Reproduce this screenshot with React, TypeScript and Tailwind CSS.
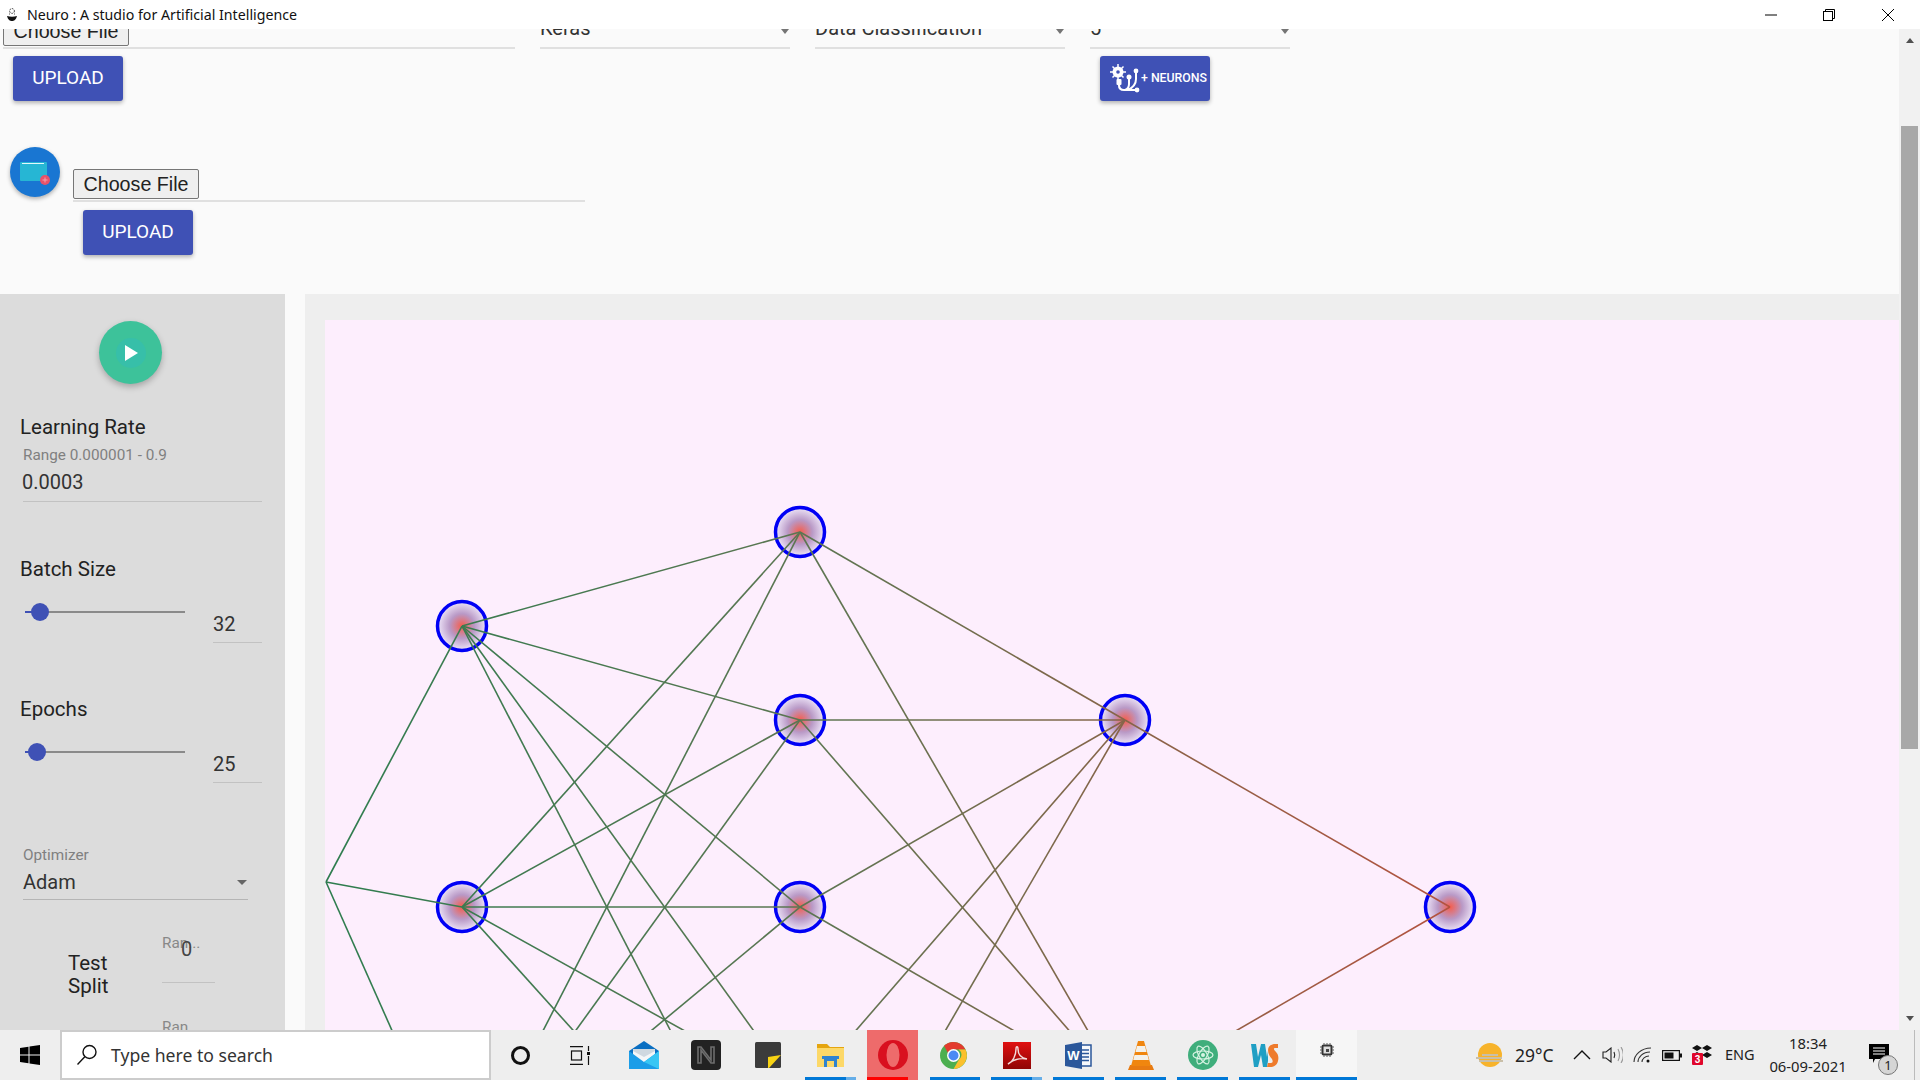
import { ReactNode } from "react";

const roboto = "font-['Roboto',sans-serif]";

// network layers, in page coordinates (the svg viewBox starts at the canvas corner)
const layers = [
  { x: 326, ys: [882] },
  { x: 462, ys: [626, 907, 1188] },
  { x: 800, ys: [532, 720, 907, 1095, 1282] },
  { x: 1125, ys: [720, 1095] },
  { x: 1450, ys: [907] },
];

const Network = () => {
  const lines: { x1: number; y1: number; x2: number; y2: number }[] = [];
  layers.forEach((layer, i) => {
    const next = layers[i + 1];
    if (!next) return;
    layer.ys.forEach((y1) => {
      next.ys.forEach((y2) => lines.push({ x1: layer.x, y1, x2: next.x, y2 }));
    });
  });

  return (
    <svg className="block h-full w-full" viewBox="325 320 1574 710" preserveAspectRatio="xMinYMin slice">
      <defs>
        <radialGradient id="nodeFill">
          <stop offset="0%" stopColor="#f65d4c" />
          <stop offset="50%" stopColor="#b999c6" />
          <stop offset="100%" stopColor="#eee6f9" />
        </radialGradient>
        <linearGradient id="lineStroke" gradientUnits="userSpaceOnUse" x1="326" y1="0" x2="1450" y2="0">
          <stop offset="0%" stopColor="#2e7d4f" />
          <stop offset="45%" stopColor="#5f7552" />
          <stop offset="100%" stopColor="#b4523f" />
        </linearGradient>
      </defs>
      {layers.slice(1).map((layer) =>
        layer.ys.map((y) => (
          <circle key={`${layer.x}-${y}`} cx={layer.x} cy={y} r="24.5" fill="url(#nodeFill)" stroke="#0000f5" strokeWidth="3.5" />
        )),
      )}
      {lines.map((l, i) => (
        <path key={i} d={`M${l.x1} ${l.y1}L${l.x2} ${l.y2 + 0.01}`} stroke="url(#lineStroke)" strokeWidth="1.6" fill="none" />
      ))}
    </svg>
  );
};

const FileField = () => (
  <div className="flex h-[33px] items-start border-b-2 border-[#e0e0e0]">
    <button className="h-[30px] w-[126px] rounded-[2px] border border-[#767676] bg-[#efefef] font-['Liberation_Sans',sans-serif] text-[19.7px] leading-[28px] text-[#222]">
      Choose File
    </button>
  </div>
);

const UploadButton = () => (
  <button className={`${roboto} h-[45px] w-[110px] rounded-[3px] bg-[#3f51b5] text-[19px] font-normal text-white shadow-[0_2px_4px_rgba(0,0,0,0.3)]`}>
    UPLOAD
  </button>
);

const TopSelect = ({ label, className }: { label: string; className: string }) => (
  <div className={`${roboto} relative h-[33px] border-b-2 border-[#e0e0e0] text-[20px] leading-[25px] text-[#333] ${className}`}>
    {label}
    <span className="absolute right-[1px] top-[13px] h-0 w-0 border-x-[4px] border-t-[5px] border-x-transparent border-t-[#757575]" />
  </div>
);

const NeuronIcon = () => (
  <svg className="shrink-0" width="31" height="31" viewBox="0 0 31 31" fill="none" stroke="#fff" strokeWidth="2">
    <path d="M8 1v16M0 9h16M2.500 3.500l11 11M13.500 3.500l-11 11" strokeWidth="1.500" />
    <circle cx="8" cy="9" r="5.500" fill="#fff" stroke="none" />
    <circle cx="8" cy="9" r="1.800" fill="#3f51b5" stroke="none" />
    <rect x="6.500" y="16" width="5" height="6" rx="1" fill="#fff" stroke="none" />
    <path d="M9 22c0 4 2 5 5 5h13" strokeWidth="2.200" />
    <path d="M19 14v7c0 3-1 5-4 6M26 8v8c0 5-4 9-8 11" strokeWidth="2" />
    <circle cx="19" cy="14" r="2.500" fill="#fff" stroke="none" />
    <circle cx="26" cy="8" r="2.400" fill="#fff" stroke="none" />
    <circle cx="27" cy="27" r="2.400" fill="#fff" stroke="none" />
  </svg>
);

const Slider = ({ thumb }: { thumb: string }) => (
  <div className="relative mt-[30px] h-[2px] w-[160px] bg-[#8a8a8a]">
    <div className={`h-full bg-[#3f51b5] ${thumb === "a" ? "w-[14px]" : "w-[12px]"}`} />
    <div className={`absolute top-[-8px] h-[18px] w-[18px] rounded-full bg-[#3f51b5] ${thumb === "a" ? "left-[6px]" : "left-[3px]"}`} />
  </div>
);

const SliderRow = ({ label, value, thumb, className }: { label: string; value: string; thumb: string; className: string }) => (
  <div className={className}>
    <div className="pl-[20px] text-[20.5px] leading-[24px] text-[#222]">{label}</div>
    <div className="flex pl-[25px]">
      <Slider thumb={thumb} />
      <div className="ml-[28px] mt-[30px] h-[32px] w-[49px] border-b border-[#c2c2c2] text-[20px] leading-[26px] text-[#333]">{value}</div>
    </div>
  </div>
);

const Settings = () => (
  <div className={`${roboto} h-full w-[285px] shrink-0 overflow-hidden bg-[#dcdcdc]`}>
    <div className="ml-[99px] mt-[27px] flex h-[63px] w-[63px] items-center justify-center rounded-full bg-[#3dc29a] shadow-[0_3px_6px_rgba(0,0,0,0.25)]">
      <div className="flex h-[30px] w-[30px] items-center justify-center rounded-full bg-[#37bfa9]">
        <svg width="14" height="16" viewBox="0 0 14 16"><path d="M1 0l13 8-13 8z" fill="#fff" /></svg>
      </div>
    </div>

    <div className="mt-[31px] pl-[20px] text-[20.5px] leading-[24px] text-[#222]">Learning Rate</div>
    <div className="ml-[23px] mt-[7px] h-[56px] w-[239px] border-b border-[#c2c2c2]">
      <div className="text-[15.3px] leading-[18px] text-[#808080]">Range 0.000001 - 0.9</div>
      <div className="ml-[-1px] mt-[5px] text-[20px] leading-[26px] text-[#333]">0.0003</div>
    </div>

    <SliderRow className="mt-[55px]" label="Batch Size" value="32" thumb="a" />
    <SliderRow className="mt-[54px]" label="Epochs" value="25" thumb="b" />

    <div className="ml-[23px] mt-[63px] h-[54px] w-[225px] border-b border-[#b5b5b5] text-[#333]">
      <div className="text-[15.3px] leading-[18px] text-[#808080]">Optimizer</div>
      <div className="relative mt-[5px] text-[20px] leading-[26px]">
        Adam
        <span className="absolute right-[1px] top-[11px] h-0 w-0 border-x-[5px] border-t-[5px] border-x-transparent border-t-[#666]" />
      </div>
    </div>

    <div className="mt-[34px] flex">
      <div className="ml-[68px] mt-[18px] w-[60px] text-[20.5px] leading-[23px] text-[#222]">
        Test<br />Split
      </div>
      <div className="ml-[34px]">
        <div className="relative h-[49px] w-[53px] border-b border-[#c2c2c2] text-[15.3px] leading-[18px] text-[#888]">
          Ran...
          <span className="absolute left-[19px] top-[3px] text-[20px] leading-[24px] text-[#444]">0</span>
        </div>
        <div className="relative mt-[35px] text-[15.3px] leading-[18px] text-[#888]">
          Ran
          <span className="absolute left-[19px] top-[8px] text-[20px] leading-[24px] text-[#444]">8</span>
        </div>
      </div>
    </div>
  </div>
);

const TaskIcon = ({ children, className = "", bar }: { children: ReactNode; className?: string; bar?: string }) => (
  <div className={`relative flex h-full shrink-0 items-center justify-center ${className}`}>
    {children}
    {bar && <div className={`absolute bottom-0 h-[3px] ${bar}`} />}
  </div>
);

const blueBar = "left-0 right-0 bg-[#0078d7]";

const MailIcon = () => (
  <svg width="30" height="28" viewBox="0 0 30 28">
    <path d="M0 10L15 0l15 10v18H0z" fill="#0a6fc2" />
    <path d="M4 8h22v8l-11 7-11-7z" fill="#f4f6f8" />
    <path d="M4 8h22v2l-11 6-11-6z" fill="#cfd8e0" />
    <path d="M0 10l15 11 15-11v18H0z" fill="#1b9de8" />
    <path d="M15 21l15-11v18z" fill="#38c6f4" />
  </svg>
);

const NotionIcon = () => (
  <svg width="30" height="30" viewBox="0 0 30 30">
    <rect width="30" height="30" rx="4" fill="#222" />
    <path d="M7 23V7h3l10 13V7h3v16h-3L10 10v13z" fill="none" stroke="#6e6e6e" strokeWidth="1.600" />
  </svg>
);

const StickyIcon = () => (
  <svg width="26" height="26" viewBox="0 0 26 26">
    <rect width="26" height="26" rx="1.500" fill="#3b3b3b" />
    <path d="M13 15l13-2-12 13h-1z" fill="#f8d313" />
  </svg>
);

const ExplorerIcon = () => (
  <svg width="27" height="23" viewBox="0 0 27 23">
    <path d="M0 0h10l3 3h14v8H0z" fill="#e5a50f" />
    <path d="M0 4h27v19H0z" fill="#fcd868" />
    <path d="M5 12h17v3h-2v8h-3v-6h-7v6H7v-8H5z" fill="#2f83d0" />
  </svg>
);

const OperaIcon = () => (
  <svg width="30" height="30" viewBox="0 0 30 30">
    <circle cx="15" cy="15" r="15" fill="#d9101f" />
    <ellipse cx="15" cy="15" rx="6.500" ry="12" fill="#ee6b6b" />
  </svg>
);

const ChromeIcon = () => (
  <svg width="27" height="27" viewBox="0 0 27 27">
    <circle cx="13.500" cy="13.500" r="13.500" fill="#4caf50" />
    <path d="M13.500 0A13.500 13.500 0 0 1 25.500 7.500H13.500a6 6 0 0 0-5.500 3.500L4 3.800A13.500 13.500 0 0 1 13.500 0z" fill="#e33b2e" />
    <path d="M25.500 7.500A13.500 13.500 0 0 1 13.500 27l5.500-9.500a6 6 0 0 0-.5-10z" fill="#fbc02d" />
    <circle cx="13.500" cy="13.500" r="6.500" fill="#fff" />
    <circle cx="13.500" cy="13.500" r="5" fill="#4a8af4" />
  </svg>
);

const AcrobatIcon = () => (
  <svg width="28" height="27" viewBox="0 0 28 27">
    <defs>
      <linearGradient id="acroFill" x1="0" y1="0" x2="0" y2="1">
        <stop offset="0%" stopColor="#e01010" />
        <stop offset="100%" stopColor="#8f0606" />
      </linearGradient>
    </defs>
    <rect width="28" height="27" fill="url(#acroFill)" />
    <path d="M5 22c5-2 8-9 8-15 0-3 2-3 2 0 0 5 3 9 9 10-6-1-13 0-19 5z" fill="none" stroke="#f3dede" strokeWidth="1.400" />
  </svg>
);

const WordIcon = () => (
  <svg width="27" height="27" viewBox="0 0 27 27">
    <path d="M15 3h11v21H15z" fill="#f6f8fb" stroke="#2b579a" strokeWidth="1.500" />
    <path d="M17 8h7M17 11.500h7M17 15h7M17 18.500h7" stroke="#2b579a" strokeWidth="1.400" />
    <path d="M0 3l17-3v27L0 24z" fill="#2b579a" />
    <text x="8.500" y="18" textAnchor="middle" fontFamily="Liberation Sans, sans-serif" fontSize="13" fontWeight="700" fill="#fff">W</text>
  </svg>
);

const VlcIcon = () => (
  <svg width="26" height="29" viewBox="0 0 26 29">
    <path d="M2 24h22l2 5H0z" fill="#e87b12" />
    <path d="M10 0h6l7 25H3z" fill="#f0860f" />
    <path d="M9 5h8l1.500 6H7.500zM6.500 14h13l1.300 5H5.200z" fill="#f4f1ea" />
  </svg>
);

const AtomIcon = () => (
  <svg width="30" height="30" viewBox="0 0 30 30">
    <circle cx="15" cy="15" r="15" fill="#3fae7c" />
    <g fill="none" stroke="#d7f3e3" strokeWidth="1.200">
      <ellipse cx="15" cy="15" rx="10" ry="4" />
      <ellipse cx="15" cy="15" rx="10" ry="4" transform="rotate(60 15 15)" />
      <ellipse cx="15" cy="15" rx="10" ry="4" transform="rotate(-60 15 15)" />
    </g>
    <circle cx="15" cy="15" r="2" fill="#d7f3e3" />
  </svg>
);

const WebStormIcon = () => (
  <svg width="28" height="24" viewBox="0 0 28 24">
    <path d="M0 1h5l2 13 3-13h4l2 13 1-6v10l-1 6h-4l-2-12-3 12H3z" fill="#1f9fc4" />
    <path d="M17 7c0-4 4-6 7-6h3v4h-3c-2 0-1 2 1 4 2 2 3 5 2 9-1 4-4 6-8 6h-3l1-4h3c2 0 2-2 1-4-2-2-4-5-4-9z" fill="#ee7b2c" />
  </svg>
);

const ChipIcon = () => (
  <svg width="14" height="14" viewBox="0 0 14 14">
    <rect x="1.500" y="1.500" width="11" height="11" rx="2" fill="#333" />
    <rect x="3.500" y="3.500" width="7" height="7" fill="#ddd" />
    <rect x="6" y="6" width="3" height="3" fill="#444" />
    <path d="M4 0v14M7 0v14M10 0v14M0 4h14M0 7h14M0 10h14" stroke="#333" strokeWidth=".8" strokeDasharray="1.500 11" />
  </svg>
);

const Taskbar = () => (
  <div className="flex h-[50px] shrink-0 items-stretch bg-[#eeeeee] font-['Noto_Sans',sans-serif] text-[#222]">
    <div className="flex w-[60px] items-center justify-center">
      <svg width="20" height="20" viewBox="0 0 20 20" fill="#000">
        <path d="M0 3l8.500-1.200v7.600H0zM9.500 1.600L20 0v9.400H9.500zM0 10.500h8.500v7.700L0 17zM9.500 10.500H20V20L9.500 18.400z" />
      </svg>
    </div>
    <div className="flex w-[431px] items-center border-2 border-[#cccccc] bg-white pl-[14px]">
      <svg width="22" height="22" viewBox="0 0 22 22" fill="none" stroke="#111" strokeWidth="1.400">
        <circle cx="13.500" cy="8" r="6.500" />
        <path d="M8.800 12.800L1.500 20.500" />
      </svg>
      <span className="ml-[13px] text-[17.6px] text-[#333]">Type here to search</span>
    </div>
    <TaskIcon className="ml-[1px] w-[56px]">
      <div className="h-[19px] w-[19px] rounded-full border-[3px] border-[#111]" />
    </TaskIcon>
    <TaskIcon className="w-[64px]">
      <svg width="21" height="19" viewBox="0 0 21 19" fill="none" stroke="#111" strokeWidth="1.200">
        <path d="M0 .6h13M0 18.400h13M18.500 0v5M18.500 10v9" />
        <rect x="1.500" y="5" width="10" height="9" />
        <rect x="17" y="6" width="3" height="3" fill="#111" stroke="none" />
      </svg>
    </TaskIcon>
    <TaskIcon className="w-[64px]"><MailIcon /></TaskIcon>
    <TaskIcon className="w-[60px]"><NotionIcon /></TaskIcon>
    <TaskIcon className="w-[64px]"><StickyIcon /></TaskIcon>
    <TaskIcon className="ml-[5px] w-[51px]" bar={blueBar}>
      <ExplorerIcon />
      <div className="absolute bottom-0 right-0 z-10 h-[3px] w-[10px] bg-[#66aee8]" />
    </TaskIcon>
    <TaskIcon className="ml-[11px] w-[51px] bg-[#ee6b6b]" bar="left-0 w-[41px] bg-[#ff0000]"><OperaIcon /></TaskIcon>
    <TaskIcon className="ml-[12px] w-[50px] pr-[4px]" bar={blueBar}><ChromeIcon /></TaskIcon>
    <TaskIcon className="ml-[11px] w-[51px]" bar={blueBar}>
      <AcrobatIcon />
      <div className="absolute bottom-0 right-0 z-10 h-[3px] w-[10px] bg-[#66aee8]" />
    </TaskIcon>
    <TaskIcon className="ml-[11px] w-[51px]" bar={blueBar}><WordIcon /></TaskIcon>
    <TaskIcon className="ml-[11px] w-[51px]" bar={blueBar}><VlcIcon /></TaskIcon>
    <TaskIcon className="ml-[11px] w-[51px]" bar={blueBar}><AtomIcon /></TaskIcon>
    <TaskIcon className="ml-[11px] w-[51px]" bar={blueBar}><WebStormIcon /></TaskIcon>
    <TaskIcon className="ml-[6px] w-[61px] bg-[#f6f6f6]" bar={blueBar}>
      <div className="mb-[10px]"><ChipIcon /></div>
    </TaskIcon>

    <div className="ml-[118px] flex w-[30px] items-center justify-center">
      <svg width="30" height="26" viewBox="0 0 30 26">
        <circle cx="15" cy="13" r="12" fill="#f7b32b" />
        <path d="M1 16h26M4 19h24M7 13h16" stroke="#c9bfa8" strokeWidth="2.200" />
      </svg>
    </div>
    <div className="ml-[10px] flex w-[44px] items-center text-[17.5px]">29°C</div>
    <div className="ml-[13px] flex w-[20px] items-center justify-center">
      <svg width="18" height="10" viewBox="0 0 18 10" fill="none" stroke="#111" strokeWidth="1.400"><path d="M1 9l8-8 8 8" /></svg>
    </div>
    <div className="ml-[9px] flex w-[22px] items-center justify-center">
      <svg width="21" height="16" viewBox="0 0 21 16" fill="none" stroke="#222" strokeWidth="1.100">
        <path d="M1 5h3l5-4v14l-5-4H1z" />
        <path d="M12 5c1 2 1 4 0 6" />
        <path d="M16 2c2 4 2 8 0 12M19 0c3 5 3 11 0 16" stroke="#999" />
      </svg>
    </div>
    <div className="ml-[9px] flex w-[22px] items-center justify-center">
      <svg width="20" height="16" viewBox="0 0 20 16" fill="none" stroke="#333" strokeWidth="1.100">
        <path d="M1 15C1 8 8 1 18 1M5 15c0-5 5-10 12-10M9 15c0-3 3-6 7-6" />
        <circle cx="15" cy="14" r="1.500" fill="#111" stroke="none" />
      </svg>
    </div>
    <div className="ml-[8px] flex w-[20px] items-center justify-center">
      <svg width="20" height="11" viewBox="0 0 20 11">
        <rect x=".6" y=".6" width="16.800" height="9.800" fill="none" stroke="#111" strokeWidth="1.200" />
        <rect x="2.500" y="2.500" width="9" height="6" fill="#111" />
        <rect x="18" y="3.500" width="2" height="4" fill="#111" />
      </svg>
    </div>
    <div className="relative ml-[10px] flex w-[20px] items-center justify-center">
      <svg width="20" height="20" viewBox="0 0 20 20">
        <path d="M5 0l5 3-5 3-5-3zM15 0l5 3-5 3-5-3zM5 7l5 3-5 3-5-3zM15 7l5 3-5 3-5-3z" fill="#111" />
        <rect x="0" y="8" width="11" height="12" rx="1" fill="#e0062b" />
        <text x="5.500" y="18" textAnchor="middle" fontFamily="Liberation Sans, sans-serif" fontSize="10" fontWeight="700" fill="#fff">3</text>
      </svg>
    </div>
    <div className="ml-[13px] flex w-[38px] items-center text-[14.5px]">ENG</div>
    <div className="flex w-[90px] flex-col items-center justify-center text-[14.8px] leading-[23px]">
      <span>18:34</span>
      <span>06-09-2021</span>
    </div>
    <div className="relative ml-[16px] flex w-[30px] items-center">
      <svg className="mb-[4px]" width="20" height="19" viewBox="0 0 20 19">
        <path d="M0 0h20v15H6l-2 4v-4H0z" fill="#000" />
        <path d="M4 4h12M4 7h12M4 10h12" stroke="#fff" strokeWidth="1" />
      </svg>
      <div className="absolute left-[9px] top-[25px] flex h-[20px] w-[20px] items-center justify-center rounded-full border border-[#777] bg-[#d5d5d5] text-[13px] leading-none">1</div>
    </div>
    <div className="ml-[15px] w-px bg-[#bbb]" />
  </div>
);

const App = () => {
  return (
    <div className="flex h-screen w-full flex-col overflow-hidden bg-[#fafafa]">
      {/* window title bar */}
      <div className="relative z-10 flex h-[29px] shrink-0 items-center bg-white font-['Noto_Sans',sans-serif]">
        <svg className="ml-[6px]" width="12" height="14" viewBox="0 0 12 14">
          <circle cx="6" cy="3" r="2.400" fill="none" stroke="#333" strokeDasharray="1.500 1" />
          <path d="M1 8c1 4 3 5 5 5s4-1 5-5c-3 1-7 1-10 0z" fill="#111" />
          <path d="M3 6h1M8 6h1" stroke="#555" />
        </svg>
        <span className="ml-[9px] text-[14.2px] text-[#111]">Neuro : A studio for Artificial Intelligence</span>
        <div className="ml-auto flex items-center">
          <svg className="mr-[46px]" width="12" height="2" viewBox="0 0 12 2"><path d="M0 1h12" stroke="#000" strokeWidth="1" /></svg>
          <svg className="mr-[47px]" width="12" height="12" viewBox="0 0 12 12" fill="none" stroke="#000">
            <rect x=".5" y="2.500" width="9" height="9" />
            <path d="M2.500 2.500V.5h9v9H9.500" />
          </svg>
          <svg className="mr-[26px]" width="12" height="12" viewBox="0 0 12 12" stroke="#000"><path d="M0 0l12 12M12 0L0 12" /></svg>
        </div>
      </div>

      <div className="flex min-h-0 flex-1">
        <div className="flex min-w-0 flex-1 flex-col overflow-hidden">
          {/* page content is scrolled, so its first row sits under the title bar */}
          <div className="mt-[-13px] h-[278px] shrink-0">
            <div className="flex">
              <div className="ml-[3px] w-[512px]">
                <FileField />
                <div className="ml-[10px] mt-[7px]"><UploadButton /></div>
              </div>
              <TopSelect label="Keras" className="ml-[25px] w-[250px]" />
              <TopSelect label="Data Classification" className="ml-[25px] w-[250px]" />
              <div className="ml-[25px] w-[200px]">
                <TopSelect label="5" className="w-[200px]" />
                <button className={`${roboto} ml-[10px] mt-[7px] flex h-[45px] w-[110px] items-center rounded-[3px] bg-[#3f51b5] pl-[10px] text-[12.3px] font-medium text-white shadow-[0_2px_4px_rgba(0,0,0,0.3)]`}>
                  <NeuronIcon />
                  <span className="whitespace-nowrap">+ NEURONS</span>
                </button>
              </div>
            </div>

            <div className="ml-[10px] mt-[46px] flex">
              <div className="relative h-[50px] w-[50px] rounded-full bg-[#1976d2] shadow-[0_2px_4px_rgba(0,0,0,0.3)]">
                <svg className="absolute left-[10px] top-[15px]" width="30" height="24" viewBox="0 0 30 24">
                  <rect x="0" y="0" width="27" height="19" rx="1" fill="#26b6d4" />
                  <rect x="2" y="1" width="22" height="1" fill="#e4f7fb" />
                  <circle cx="25" cy="18" r="5" fill="#e8526a" />
                  <path d="M25 15.500v5M22.500 18h5" stroke="#f5a0ae" strokeWidth="1" />
                </svg>
              </div>
              <div className="ml-[13px] mt-[22px] w-[512px]">
                <FileField />
                <div className="ml-[10px] mt-[8px]"><UploadButton /></div>
              </div>
            </div>
          </div>

          <div className="flex min-h-0 flex-1">
            <Settings />
            <div className="ml-[20px] flex min-w-0 flex-1 flex-col bg-[#eeeeee] pl-[20px] pt-[26px]">
              <div className="min-h-0 flex-1 bg-[#fdeefd]">
                <Network />
              </div>
            </div>
          </div>
        </div>

        {/* scrollbar */}
        <div className="flex w-[21px] shrink-0 flex-col items-center bg-[#f1f1f1]">
          <span className="mt-[9px] h-0 w-0 border-x-[4.500px] border-b-[5px] border-x-transparent border-b-[#505050]" />
          <div className="mt-[83px] h-[623px] w-[17px] bg-[#a8a8a8]" />
          <span className="mt-auto mb-[9px] h-0 w-0 border-x-[4.500px] border-t-[5px] border-x-transparent border-t-[#505050]" />
        </div>
      </div>

      <Taskbar />
    </div>
  );
};

export default App;
